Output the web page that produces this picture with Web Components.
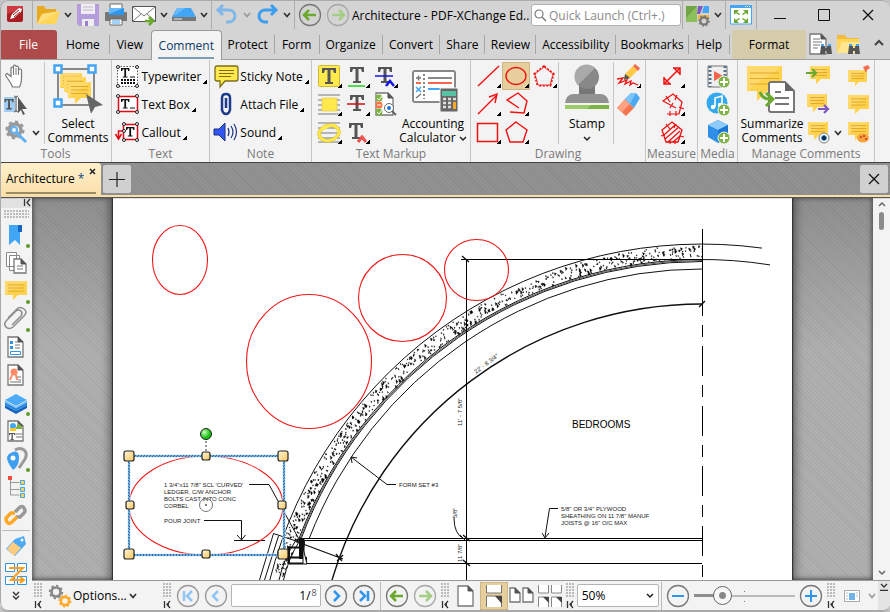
<!DOCTYPE html>
<html lang="en">
<head>
<meta charset="utf-8">
<title>Architecture - PDF-XChange Editor</title>
<style>
  html, body { height: 100%; }
  body {
    margin: 0;
    background: #c4c4c4;
    font-family: "Open Sans", "Noto Sans", sans-serif;
    font-size: 12px;
    color: #000;
  }
</style>
</head>
<body>
<pdf-editor></pdf-editor>

<script>
// ---------- icon parts ----------
const bubble = (x, y, w, h) => `
  <path d="M${x} ${y}h${w}v${h}h-${w * .45 | 0}l-${h * .4 | 0} ${h * .4 | 0}v-${h * .4 | 0}H${x}z" fill="#ffd24d"/>
  <path d="M${x} ${y}h${w}L${x} ${y + h}z" fill="#ffdf80" opacity=".6"/>
  <path d="M${x + 3} ${y + h * .28}h${w - 6}M${x + 3} ${y + h * .5}h${w - 6}M${x + 3} ${y + h * .72}h${w - 6}" stroke="#e0a92a"/>`;

const page = (x, y, w, h, c = '#777') => `
  <path d="M${x} ${y}h${w - 5}l5 5v${h - 5}H${x}z" fill="#fff" stroke="${c}" stroke-width="1.3"/>
  <path d="M${x + w - 5} ${y}l5 5h-5z" fill="#555" stroke="#555"/>`;

const bigT = (x, y, s = 1, c = '#555') =>
  `<path transform="translate(${x} ${y}) scale(${s})" d="M0 0h14v5h-2l-1-3H8.500v12H11v2H3v-2h2.500V2H3L2 5H0z" fill="${c}"/>`;

const plus = (x, y) => `
  <circle cx="${x}" cy="${y}" r="6" fill="#7cb342" stroke="#f3f3f3"/>
  <path d="M${x - 4} ${y}h8M${x} ${y - 4}v8" stroke="#fff" stroke-width="2"/>`;

const ring = (inner, c = '#777') => `<circle cx="14" cy="14" r="10.500" fill="none" stroke="${c}" stroke-width="1.300"/>${inner}`;

const knobs = pts => pts.map(([x, y]) => `<circle cx="${x}" cy="${y}" r="1.500" fill="#fff" stroke="#222"/>`).join('');

const lines = (x1, x2, ys, c, w = 2) =>
  ys.map(y => `<path d="M${x1} ${y}H${x2}" stroke="${c}" stroke-width="${w}"/>`).join('');

const binoculars = (x, y) => `
  <g transform="translate(${x} ${y})" fill="#555"><path d="M1 2h4v8H0zM7 2h4l1 8H7zM4 4h4v3H4z"/><path d="M1 0h3v2H1zM8 0h3v2H8z" fill="#42a5f5"/></g>`;

// body ring plus eight teeth
const gear = (x, y, r, c) => `
  <circle cx="${x}" cy="${y}" r="${r}" fill="none" stroke="${c}" stroke-width="${r * .6}"/>
  <circle cx="${x}" cy="${y}" r="${r * 1.400}" fill="none" stroke="${c}" stroke-width="${r * .4}" pathLength="16" stroke-dasharray="1 1"/>`;

// ---------- icons, drawn in a 28px cell unless a size is given ----------
const ICONS = {
  chev: { w: 12, svg: '<path d="M3 12l3 3.500 3-3.500" fill="none" stroke="#333" stroke-width="1.700"/>' },
  chevSoft: { w: 12, svg: '<path d="M3 12l3 3.500 3-3.500" fill="none" stroke="#999" stroke-width="1.700"/>' },
  chevUp: '<path d="M13 15l4-4 4 4" fill="none" stroke="#444" stroke-width="2"/>',
  logo: '<rect x="4" y="5" width="16" height="16" rx="2" fill="#a81c22"/><path d="M4 13V5h16v3z" fill="#cf3a40"/><path d="M7 18l2-5 7-6 3 1-1 3-7 6z" fill="#fff"/><path d="M10 14l6-5M11 16l6-5" stroke="#a81c22"/>',
  folder: '<path d="M3 5h7l2 3h10v5l-4 9H3z" fill="#e8aa1e"/><path d="M3 23l5-10 18-3-4 13z" fill="#ffd65a"/><path d="M3 23l5-10 18-3z" fill="#ffe38a" opacity=".7"/>',
  save: '<path d="M3 3h22v22H5l-2-2z" fill="#b39ddb"/><path d="M7 3h14v10H7z" fill="#f1edf6"/><path d="M9 6h10M9 9h10" stroke="#bbb"/><path d="M8 18h12v7H8z" fill="#eee"/><path d="M11 20h3v5h-3z" fill="#9b7fc9"/>',
  print: '<path d="M8 3h12v7H8z" fill="#fff" stroke="#666"/><path d="M3 12q0-1 1-1h20q1 0 1 1v8H3z" fill="#777"/><path d="M7 7h15v7H7z" fill="#2f95ec"/><path d="M7 7h15L7 13z" fill="#66b8fa"/><path d="M8 18h12v6H8z" fill="#fff" stroke="#666"/><path d="M10 20h8M10 22h8" stroke="#42a5f5"/>',
  mail: '<path d="M2.500 5.500h23v15h-23z" fill="#fff" stroke="#555"/><path d="M3 6l11 9L25 6M3 20l8-7M25 20l-8-7" fill="none" stroke="#777"/><path d="M15 20h8M19 16l4 4-4 4" fill="none" stroke="#6aa82f" stroke-width="2.500"/>',
  scan: '<path d="M7 7h14l5 9H2z" fill="#42a5f5"/><path d="M7 7h8L4 15z" fill="#6dbcfa"/><path d="M2 16h24v4H2z" fill="#777"/><path d="M4 18h8" stroke="#eee"/>',
  undo: '<path d="M10 4l-5 5 5 5M6 9h10a6 6 0 0 1 0 12h-3" fill="none" stroke="#7fb8e8" stroke-width="3"/>',
  redo: '<path d="M18 4l5 5-5 5M22 9H12a6 6 0 0 0 0 12h3" fill="none" stroke="#3d9ef0" stroke-width="3"/>',
  back: ring('<path d="M20 14H9M13 9l-5 5 5 5" fill="none" stroke="#6aa82f" stroke-width="2.500"/>'),
  fwd: ring('<path d="M8 14h11M15 9l5 5-5 5" fill="none" stroke="#a5cd85" stroke-width="2.500"/>', '#a8a8a8'),
  first: ring('<path d="M10 9v10M18 9l-5 5 5 5" fill="none" stroke="#90c5f5" stroke-width="2.500"/>', '#999'),
  prev: ring('<path d="M16 9l-5 5 5 5" fill="none" stroke="#90c5f5" stroke-width="2.500"/>', '#999'),
  next: ring('<path d="M12 9l5 5-5 5" fill="none" stroke="#2f95ec" stroke-width="2.500"/>'),
  last: ring('<path d="M10 9l5 5-5 5M18 9v10" fill="none" stroke="#2f95ec" stroke-width="2.500"/>'),
  minus: ring('<path d="M8 14h12" stroke="#2f95ec" stroke-width="2"/>'),
  zoomIn: ring('<path d="M8 14h12M14 8v12" stroke="#2f95ec" stroke-width="2"/>'),
  uiTheme: '<path d="M2 5h11v16H2z" fill="#8bbf5a"/><path d="M2 5h11L2 17z" fill="#6fa544"/><path d="M14 5h5l-3 8h-3z" fill="#7e57c2"/><path d="M20 5h5v7h-7z" fill="#42a5f5"/><path d="M14 14h11v4H14z" fill="#f0b23c"/>' + gear(20, 20, 3.6, '#777'),
  fullScreen: '<path d="M3.500 5h21v18h-21z" fill="#fff" stroke="#42a5f5"/><path d="M3 4h22v3H3z" fill="#42a5f5"/><path d="M18 5.500h1M20 5.500h1M22 5.500h1" stroke="#fff"/><path d="M7 9h5l-2 2 3 2-1 1-3-2-2 2zM21 9h-5l2 2-3 2 1 1 3-2 2 2zM7 22h5l-2-2 3-2-1-1-3 2-2-2zM21 22h-5l2-2-3-2 1-1 3 2 2-2z" fill="#6aa82f"/>',
  winMin: '<path d="M8 17.500h12" stroke="#111"/>',
  winMax: '<path d="M8.500 8.500h11v11h-11z" fill="none" stroke="#111"/>',
  winClose: '<path d="M9 9l10 10M19 9L9 19" stroke="#111" stroke-width="1.300"/>',
  findPage: page(4, 4, 16, 20) + '<path d="M7 9h7M7 12h9M7 15h7M7 18h5" stroke="#777"/>' + binoculars(14, 14),
  findFolder: '<path d="M3 5h8l2 3h12v5H3z" fill="#f0bc3a"/><path d="M3 9h22v14H3z" fill="#ffd65a"/><path d="M3 23l5-11h18l-4 11z" fill="#ffe690"/>' + binoculars(14, 14),

  hand: '<path d="M8 20l-4-6q-1-2 1-2.500l4 3V6q1-2 2.500 0V4q1-2 2.500 0v1q1-2 2.500 0v3q2-2 3 0v9q0 4-2 8h-7q-1-3-2.500-5z" fill="#fff" stroke="#777" stroke-width="1.200"/><path d="M11.500 6v7M14 6v7M16.500 8v5" stroke="#777"/>',
  selText: '<path d="M2 7h11v15H2z" fill="#9fcdf5"/>' + bigT(2.500, 9, .65) + '<path d="M12 6q2 0 2 2v12q0 2-2 2M16 6q-2 0-2 2M16 22q-2 0-2-2" fill="none" stroke="#555"/><path d="M16 7l9 12h-5l3 5-2 1-2-5-3 3z" fill="#555"/>',
  gearWrench: gear(13, 12, 6, '#999') + '<path d="M13 13l11 11" stroke="#5eb3f6" stroke-width="3"/><circle cx="12" cy="12" r="3" fill="#f3f3f3" stroke="#5eb3f6" stroke-width="2"/>',
  typewriter: '<path d="M3.500 4.500h20v20h-20z" fill="#fff" stroke="#555" stroke-dasharray="1.500 1.500"/>' + bigT(7, 6, .6, '#111') + '<path d="M16 15h5" stroke="#111"/><path d="M7 18h14M7 21h14" stroke="#111" stroke-width="2" stroke-dasharray="2 1"/>' + knobs([[4, 5], [23, 5], [4, 24], [23, 24]]),
  textBox: '<path d="M4.500 6.500h19v15h-19z" fill="#fff" stroke="#e30613" stroke-width="1.500"/>' + bigT(7, 9, .6, '#111') + '<path d="M16 18h5" stroke="#111"/>' + knobs([[4, 6], [23, 6], [4, 22], [23, 22]]),
  callout: '<path d="M9.500 6.500h14v15h-14z" fill="#fff" stroke="#e30613" stroke-width="1.500"/>' + bigT(12, 9, .6, '#111') + '<path d="M9 13H4.500v7M1.500 16l3 5 3-5" fill="none" stroke="#e30613" stroke-width="1.500"/>' + knobs([[10, 6], [23, 6], [10, 13], [23, 22], [10, 22]]),
  sticky: '<path d="M5 4h19q2 0 2 2v11q0 2-2 2H13l-5 6v-6H5q-2 0-2-2V6q0-2 2-2z" fill="#ffe94d" stroke="#7c6c1a" stroke-width="1.300"/><path d="M7 8.500h15M7 11.500h15M7 14.500h12" stroke="#7c6c1a"/>',
  attach: '<path d="M10 10v10q1 4 4 4t4-4V8q0-4-4-4t-4 4v8" fill="none" stroke="#1e3a8a" stroke-width="2.500"/><path d="M14 8v10" stroke="#1e3a8a" stroke-width="2.500"/>',
  sound: '<path d="M2 11h5l6-6v18l-6-6H2z" fill="#3355f0" stroke="#1a2f86"/><path d="M16 10q2 4 0 8M19 8q4 6 0 12M22 6q5 8 0 16" fill="none" stroke="#1a2f86" stroke-width="1.200"/>',
  hiT: '<rect x="3.500" y="3.500" width="21" height="21" rx="1" fill="#ffe94d" stroke="#d2b93a"/>' + bigT(7, 6),
  underT: bigT(7, 5) + '<path d="M5 24h17" stroke="#1bd31b" stroke-width="1.500"/>',
  replaceT: bigT(7, 5) + '<path d="M4 14h18" stroke="#1414e6" stroke-width="1.500"/><path d="M15 24l4-5 4 5" fill="none" stroke="#1414e6" stroke-width="2.500"/>',
  hiArea: lines(3, 25, [5, 10, 15, 20, 24], '#b5b5b5') + '<path d="M7 8h15v13H7z" fill="#ffe94d" stroke="#e2c63b" stroke-width=".6"/>',
  strikeT: bigT(7, 5) + '<path d="M4 14h18" stroke="#e30613" stroke-width="1.500"/>',
  compareDoc: page(5, 3, 17, 22) + '<circle cx="8" cy="8" r="3.500" fill="#7cb342"/><circle cx="8" cy="15" r="3.500" fill="#ff7043"/><circle cx="8" cy="22" r="3.500" fill="#7cb342"/><path d="M6 8l2 2 3-4M6 22l2 2 3-4M6 15h4" fill="none" stroke="#fff"/><circle cx="18" cy="18" r="4.500" fill="#fff" stroke="#666"/><circle cx="18" cy="18" r="2" fill="#1976d2"/><path d="M21 21l4 4" stroke="#666" stroke-width="2"/>',
  hiFree: lines(3, 25, [5, 10, 15, 20, 24], '#b5b5b5') + '<g fill="none"><ellipse cx="14" cy="15" rx="10" ry="7.500" stroke="#d8bd25" stroke-width="3.500" transform="rotate(-15 14 15)"/><ellipse cx="14" cy="15" rx="10" ry="7.500" stroke="#ffe94d" stroke-width="2.500" transform="rotate(-15 14 15)"/><path d="M8 12q5-5 13-5" stroke="#ffe94d" stroke-width="2"/></g>',
  insertT: bigT(6, 5) + '<path d="M15 24l4-5 4 5" fill="none" stroke="#ef5350" stroke-width="3"/>',
  line: '<path d="M4 24L25 4" stroke="#f01010" stroke-width="1.400"/>',
  oval: '<ellipse cx="14" cy="14" rx="10" ry="8.500" fill="none" stroke="#f01010" stroke-width="1.400"/>',
  cloud: '<path d="M14 5l9 7-3 11H8L5 12z" fill="none" stroke="#f01010" stroke-width="3" stroke-dasharray="2 1.500"/><path d="M14 5l9 7-3 11H8L5 12z" fill="#f3f3f3" stroke="#f01010" stroke-width=".8"/>',
  arrow: '<path d="M4 24L22 6M15 7l8-3-2 9" fill="none" stroke="#f01010" stroke-width="1.400"/>',
  polyline: '<path d="M17 18L5 10l11-7 9 8-3 12-14-1" fill="none" stroke="#f01010" stroke-width="1.400"/>',
  rect: '<path d="M3.500 5.500h20v18h-20z" fill="none" stroke="#f01010" stroke-width="1.500"/>',
  polygon: '<path d="M14 4l11 8-4 12H8L4 12z" fill="none" stroke="#f01010" stroke-width="1.400"/>',
  pencil: '<path d="M11 12l8-8 5 4-8 8-6 2z" fill="#ffc845"/><path d="M19 4l2-2 5 4-2 3z" fill="#ef6c50"/><path d="M10 18l1-6 5 4z" fill="#555"/><path d="M3 17l6-1-4 5 8-3-2 4 6-3-1 4 3-2 5 2" fill="none" stroke="#f01010" stroke-width="1.300"/>',
  eraser: '<path d="M11 9l9 9-8 8-9-8z" fill="#f4764e"/><path d="M11 9l5 5-8 8-5-4z" fill="#ffa183"/><path d="M11 9l6-6h5l4 5-6 10z" fill="#4aa9f2"/><path d="M11 9l6-6h5l-6 11z" fill="#7cc4fa"/>',
  distance: '<path d="M6 22L22 6M6 15v7h7M15 6h7v7M6 16l6 6M16 6l6 6" fill="none" stroke="#f01010" stroke-width="1.500"/>',
  perimeter: '<path d="M18 18L5 11l10-7 9 8-3 12H9" fill="none" stroke="#f01010" stroke-width="1.200"/><path d="M8 6l4 6M19 5l-2 5M21 17l5 2M12 21v5M18 21v5M12 18l3-5" stroke="#f01010" stroke-width="1.200"/>',
  area: '<path d="M14 4l10 8-4 12H8L4 12z" fill="none" stroke="#f01010" stroke-width="1.300"/><path d="M6 17L17 7M7 21L21 9M10 24l12-11M15 24l7-6M8 6l4 5M18 6l-2 4M3 18l4-1M22 18l4 1M12 22v4M17 22v4" stroke="#f01010" stroke-width="1.200"/>',
  film: '<path d="M4 4h19v21H4z" fill="#eee" stroke="#777"/><path d="M6 4v21M21 4v21" stroke="#54708a" stroke-width="3" stroke-dasharray="2 2"/><path d="M10 9l9 5-9 5z" fill="#f4664c"/>' + plus(20, 20),
  music: '<circle cx="13" cy="13" r="10.500" fill="#33a8ee"/><path d="M11 17V8l7-2v9" fill="none" stroke="#fff" stroke-width="1.600"/><circle cx="9" cy="17" r="2.200" fill="#fff"/><circle cx="16" cy="15" r="2.200" fill="#fff"/>' + plus(20, 20),
  cube: '<path d="M14 2l10 5v12l-10 6-10-6V7z" fill="#2f8fe6"/><path d="M14 2l10 5-10 5L4 7z" fill="#8fcbfa"/><path d="M14 12v13l10-6V7z" fill="#1976d2"/>' + plus(20, 20),
  importC: bubble(6, 4, 20, 13) + '<path d="M2 11h9M8 7l4 4-4 4" fill="none" stroke="#6aa82f" stroke-width="2.200"/>',
  exportC: bubble(3, 4, 20, 13) + '<path d="M14 19h9M20 15l4 4-4 4" fill="none" stroke="#7e57c2" stroke-width="2.200"/>',
  showC: bubble(4, 4, 20, 13) + '<circle cx="20" cy="20" r="5" fill="#fff" stroke="#777"/><circle cx="20" cy="20" r="2.500" fill="#123" stroke="#2f95ec"/>',
  pinC: bubble(4, 8, 19, 12) + '<path d="M19 5l5-2 2 3-3 2-1 3z" fill="#ef6c50"/>',
  plainC: bubble(4, 5, 21, 14),
  paintC: bubble(4, 4, 21, 13) + '<ellipse cx="19" cy="20" rx="6" ry="4.500" fill="#f6a13a"/><path d="M16 19h2M19 18h2M21 21h2" stroke="#c0392b" stroke-width="1.500"/>',

  bookmark: '<path d="M9 4h12v6h-1v14l-5-5-6 5z" fill="#42a5f5"/><path d="M19 4h3v7h-4V5z" fill="#1565c0"/>',
  pages: '<path d="M6.500 3.500h10v14h-10zM9.500 6.500h10v15h-10z" fill="#fff" stroke="#888"/>' + page(14, 10, 12, 14) + '<path d="M17 17h6M17 20h6" stroke="#777"/>',
  comments: bubble(5, 4, 22, 14),
  clip: '<path d="M12 20l9-9q2-3 0-5t-5 0L7 15q-4 4-1 7t7 0l11-11q4-4 0-7t-7 0L8 13" fill="none" stroke="#8d8d8d" stroke-width="1.500"/>',
  fields: page(8, 4, 15, 20) + '<path d="M10 8h3v3h-3zM10 13h3v3h-3z" fill="#2f95ec"/><path d="M15 9h3M15 12h5M15 15h5" stroke="#777"/><path d="M10.500 18.500h10v3h-10z" fill="none" stroke="#2f95ec"/>',
  signs: page(8, 4, 15, 20) + '<circle cx="14" cy="11" r="3.500" fill="#ff8a65"/><path d="M12 14l-2 5M16 14l1 5" stroke="#ff8a65" stroke-width="2"/><path d="M17 16h4M10 21h11M18 19h3" stroke="#777"/>',
  layers: '<path d="M5 16l11 6 11-6v3l-11 6-11-6z" fill="#1565c0"/><path d="M5 12v4l11 6 11-6v-4l-11 6z" fill="#2586e0"/><path d="M5 11l11-6 11 6-11 6z" fill="#4dabf5"/><path d="M5 13l11 6 11-6" fill="none" stroke="#8fcbfa"/>',
  content: page(8, 4, 15, 20) + '<circle cx="13" cy="9" r="3" fill="#42a5f5"/><path d="M15 12l4-6 4 6z" fill="#7cb342"/><path d="M10 11h6v3h-6z" fill="#ffca28"/>' + bigT(9, 16, .45) + '<path d="M16 17h6M16 20h6" stroke="#777"/>',
  places: '<path d="M15 5q5-3 9 0t1 9l-6 9" fill="none" stroke="#999" stroke-width="3"/><path d="M13 25q-6-8-6-12t6-6 6 6-6 12z" fill="#3f9ef0"/><circle cx="13" cy="13" r="2.500" fill="#fff"/>',
  tree: '<path d="M8 3h4v4H8z" fill="#ef4b3c"/><path d="M10.500 7v15h9M10.500 9.500h9M10.500 16.500h9" fill="none" stroke="#999"/><path d="M20.500 7.500h4v4h-4zM20.500 14.500h4v4h-4zM20.500 20.500h4v4h-4z" fill="#ffd24d" stroke="#42a5f5"/>',
  links: '<path d="M15 11l4-4q3-3 5 0t0 5l-4 4-4 0" fill="none" stroke="#999" stroke-width="3.500"/><path d="M17 16l-5 5q-3 3-5 0t0-5l4-4h4" fill="none" stroke="#ffa726" stroke-width="3.500"/>',
  tag: '<path d="M15 7l9-3 2 8-11 12-9-7z" fill="#4dabf5"/><path d="M13 10l8 6-7 8-7-7z" fill="#ffcc80"/><circle cx="22" cy="8" r="1.500" fill="#fff"/>',
  reflow: '<path d="M5.500 3.500h9v8h-9zM17.500 3.500h9v8h-9zM5.500 16.500h9v8h-9zM17.500 16.500h9v8h-9z" fill="#fff" stroke="#2f95ec"/><path d="M9 8h14L11 20h13M20 17l4 3-4 3" fill="none" stroke="#ff9f1c" stroke-width="2"/>',
  gears: gear(11, 10, 4.5, '#888') + gear(20, 19, 4, '#ffa726'),
  onePage: page(6, 4, 15, 20),
  contPage: '<path d="M6.500 3v8h15V3" fill="#fff" stroke="#777"/><path d="M6.500 25V14h15v11" fill="#fff" stroke="#777"/><path d="M15 14h7v8z" fill="#444"/>',
  twoPage: page(2, 6, 10, 14) + page(15, 6, 10, 14),
  fourPage: '<path d="M2.500 3v8h10V3M15.500 3v8h10V3M2.500 25V15h10v10M15.500 25V15h10v10" fill="#fff" stroke="#888"/><path d="M7 15h6v6zM20 15h6v6z" fill="#444"/>',
  panes: '<path d="M6.500 8.500h15v11h-15z" fill="#fff" stroke="#aaa"/><path d="M11 11h6v7h-6z" fill="#6fb3e8"/><path d="M8 11h2M8 14h2M8 17h2M18 11h2M18 14h2" stroke="#bbb"/>',
  plusThin: '<path d="M14 7v15M6 14.500h16" stroke="#222" stroke-width="1.200"/>',

  selectBig: { w: 60, h: 50, svg: '<path d="M10 6h36v36H10z" fill="none" stroke="#888" stroke-width="2"/>' + bubble(12, 10, 22, 15) + bubble(16, 14, 22, 15) + bubble(20, 19, 23, 16) + '<path d="M6.500 2.500h7v7h-7zM40.500 2.500h7v7h-7zM6.500 36.500h7v7h-7z" fill="#fff" stroke="#42a5f5" stroke-width="2.500"/><path d="M38 31l17 11-8 2-4 7z" fill="#666"/>' },
  calcBig: { w: 60, h: 50, svg: '<rect x="10" y="8" width="42" height="31" rx="2" fill="#fff" stroke="#888" stroke-width="2"/><path d="M13 15h5M15.500 12.500v5M13 35l5-4" stroke="#777" stroke-width="1.500"/><path d="M13 20h5" stroke="#f4664c" stroke-width="2"/><path d="M13 24l5 5M18 24l-5 5" stroke="#42a5f5" stroke-width="1.500"/><path d="M21 11v25" stroke="#888" stroke-width="2" stroke-dasharray="2 2"/><path d="M25 15h24" stroke="#888" stroke-width="2"/><path d="M25 20h24" stroke="#f4664c" stroke-width="2"/><path d="M25 26h24" stroke="#42a5f5" stroke-width="2"/><rect x="37" y="25" width="18" height="24" rx="1" fill="#666" stroke="#f3f3f3"/><path d="M39 28h14v5H39z" fill="#58c2a5"/><path d="M40 36h3M45 36h3M40 40h3M45 40h3M40 44h3M45 44h3M50 36h3" stroke="#ddd" stroke-width="2.500"/><path d="M50 39h3v7h-3z" fill="#f7a928"/>' },
  stampBig: { w: 60, h: 50, svg: '<path d="M22 20h16v12H22z" fill="#777"/><circle cx="30" cy="14" r="12" fill="#888"/><path d="M21 22a12 12 0 1 1 17-17z" fill="#aaa"/><path d="M8 40q1-9 9-9h26q8 0 9 9z" fill="#929292"/><path d="M8 42h44v4H8z" fill="#7cb342"/><path d="M8 42h26l-4 4H8z" fill="#9ccc65"/>' },
  summaryBig: { w: 60, h: 50, svg: bubble(5, 3, 35, 25) + '<path d="M29 19h14l9 9v21H29q-2 0-2-2V21q0-2 2-2z" fill="#fff" stroke="#777" stroke-width="2"/><path d="M43 19v9h9z" fill="#666"/><path d="M33 29h6M33 35h14M33 41h14" stroke="#777" stroke-width="2"/><path d="M18 29q3 8 11 7M24 30l7 6-7 7" fill="none" stroke="#6aa82f" stroke-width="3"/>' }
};

// ---------- base ----------
class PxElement extends HTMLElement {
  constructor() {
    super();
    this.attachShadow({ mode: 'open' });
  }
  connectedCallback() {
    this.shadowRoot.innerHTML = `<style>${this.styles()}</style>${this.markup()}`;
  }
  styles() { return ''; }
  markup() { return '<slot></slot>'; }
}

class PxIcon extends PxElement {
  styles() { return ':host { display: block; flex: none; } svg { display: block; }'; }
  markup() {
    const entry = ICONS[this.getAttribute('name')];
    const icon = typeof entry === 'string' ? { svg: entry } : entry;
    const w = icon.w || 28;
    const h = icon.h || 28;
    return `<svg width="${w}" height="${h}" viewBox="0 0 ${w} ${h}" aria-hidden="true">${icon.svg}</svg>`;
  }
}
customElements.define('px-icon', PxIcon);

// icon: icon name, corner: small black mark, big: icon above the label
class ToolButton extends PxElement {
  styles() {
    return `
      :host { display: block; flex: none; }
      button {
        all: unset; box-sizing: border-box; position: relative;
        display: flex; align-items: center; min-height: 28px;
        font: inherit; color: inherit; white-space: nowrap; cursor: default;
      }
      .mark {
        width: 4px; height: 4px; align-self: flex-end; margin: 0 0 6px 2px;
        background: linear-gradient(135deg, transparent 50%, #000 50%);
      }
      :host([iconic]) .mark { position: absolute; right: 1px; bottom: 2px; margin: 0; }
      :host([selected]) button { background: #e6cf9c; box-shadow: inset 0 0 0 1px #cdb686; }
      :host([big]) button { flex-direction: column; text-align: center; line-height: 14px; }
      :host([big]) px-icon { margin: 1px 0 4px; }
      :host([wide]) button { width: 44px; justify-content: center; }
      .dot { position: absolute; right: -2px; bottom: 1px; width: 4px; height: 4px; border-radius: 50%; background: #5f9d2a; }
    `;
  }
  markup() {
    const name = this.getAttribute('label');
    return `<button type="button" ${name ? `aria-label="${name}"` : ''}>
      <px-icon name="${this.getAttribute('icon')}"></px-icon>
      ${this.hasAttribute('iconic') ? '' : '<span><slot></slot></span>'}
      ${this.hasAttribute('corner') ? '<span class="mark"></span>' : ''}
      ${this.hasAttribute('dot') ? '<span class="dot"></span>' : ''}
    </button>`;
  }
}
customElements.define('tool-button', ToolButton);

const tool = (icon, label, extra = '') =>
  `<tool-button iconic icon="${icon}" label="${label}" ${extra}></tool-button>`;

class GripHandle extends PxElement {
  styles() {
    return `
      :host { display: flex; flex-direction: column; align-items: flex-start; gap: 2px; width: 11px; margin-left: 2px; flex: none; }
      i { width: 9px; height: 15px; background: radial-gradient(circle at 1px 1px, #bbb 1px, transparent 1px) 0 0 / 3px 3px; }
    `;
  }
  markup() {
    return '<i></i><svg width="9" height="9" aria-hidden="true"><path d="M1.500 1v7M7 1L4 4.500 7 8M4 4.500h2" fill="none" stroke="#333" stroke-width="1.300"/></svg>';
  }
}
customElements.define('grip-handle', GripHandle);

// ---------- title bar ----------
class TitleBar extends PxElement {
  styles() {
    return `
      :host { display: flex; align-items: center; height: 30px; background: #d4d4d4; }
      hr { width: 1px; height: 28px; margin: 0 1px; border: 0; background: #adadad; flex: none; }
      h1 { flex: 1; min-width: 0; margin: 0; font: inherit; white-space: nowrap; }
      label {
        display: flex; align-items: center; box-sizing: border-box; width: 150px; height: 22px;
        background: #fff; border: 1px solid #b0b0b0; border-radius: 3px; flex: none;
      }
      input { all: unset; width: 126px; font: inherit; }
      input::placeholder { color: #8a8a8a; opacity: 1; }
      .logo { width: 31px; }
      .logo px-icon { margin-left: 3px; }
      label svg { margin: 0 2px 0 1px; flex: none; }
    `;
  }
  markup() {
    return `
      <span class="logo"><px-icon name="logo"></px-icon></span><hr>
      ${tool('folder', 'Open')}${tool('chev', 'Open options')}
      ${tool('save', 'Save')}${tool('print', 'Print')}
      ${tool('mail', 'Email')}${tool('chev', 'Email options')}
      ${tool('scan', 'Scan')}${tool('chev', 'Scan options')}<hr>
      ${tool('undo', 'Undo')}${tool('chevSoft', 'Undo list')}
      ${tool('redo', 'Redo')}${tool('chev', 'Redo list')}<hr>
      ${tool('back', 'Previous view')}${tool('fwd', 'Next view')}
      <h1>Architecture - PDF-XChange Ed..</h1>
      <label>
        <svg width="14" height="16" aria-hidden="true"><circle cx="6" cy="7" r="4" fill="none" stroke="#777" stroke-width="1.200"/><path d="M9 10l4 4" stroke="#777" stroke-width="1.500"/></svg>
        <input type="text" aria-label="Quick Launch" placeholder="Quick Launch (Ctrl+.)">
      </label><hr>
      ${tool('uiTheme', 'UI options')}${tool('chev', 'UI options list')}<hr>
      ${tool('fullScreen', 'Full screen')}<hr>
      ${tool('winMin', 'Minimize', 'wide')}${tool('winMax', 'Maximize', 'wide')}${tool('winClose', 'Close', 'wide')}`;
  }
}
customElements.define('title-bar', TitleBar);

// ---------- ribbon tabs ----------
class RibbonTab extends PxElement {
  styles() {
    return `
      :host { display: flex; min-width: 0; position: relative; }
      button {
        all: unset; flex: 1; text-align: center; white-space: nowrap; cursor: default;
        margin: 5px 0; line-height: 19px; border-right: 1px solid #a6a6a6;
      }
      :host([plain]) button { border-color: transparent; }
      :host([kind]) button { margin: 0; line-height: 29px; border: 0; }
      :host([kind=file]) button { background: #ad4a4a; color: #fff; border-radius: 3px 3px 0 0; }
      :host([kind=format]) { margin-left: 2px; }
      :host([kind=format]) button { background: #d5ccab; }
      :host([kind=active]) { margin-bottom: -1px; }
      :host([kind=active]) button {
        background: linear-gradient(#7c9fb5, #7c9fb5) center bottom 1px / 56px 2px no-repeat #f3f3f3;
        color: #0b3a66; border: 1px solid #999; border-bottom: 0; border-radius: 4px 4px 0 0; line-height: 28px;
      }
    `;
  }
  markup() { return '<button type="button" role="tab"><slot></slot></button>'; }
}
customElements.define('ribbon-tab', RibbonTab);

class RibbonTabs extends PxElement {
  styles() {
    return ':host { display: flex; height: 29px; background: #d4d4d4; border-bottom: 1px solid #a0a0a0; }';
  }
  markup() {
    const tabs = [
      ['File', 57, 'kind="file"'], ['Home', 53], ['View', 41, 'plain'], ['Comment', 71, 'kind="active"'],
      ['Protect', 53], ['Form', 45], ['Organize', 63], ['Convert', 58], ['Share', 45], ['Review', 51],
      ['Accessibility', 80], ['Bookmarks', 73], ['Help', 41], ['Format', 74, 'kind="format"']
    ];
    return tabs.map(([text, grow, extra = '']) => `<ribbon-tab ${extra} style="flex: ${grow} 1 0">${text}</ribbon-tab>`).join('')
      + tool('findPage', 'Find') + tool('findFolder', 'Search') + tool('chevUp', 'Collapse ribbon');
  }
}
customElements.define('ribbon-tabs', RibbonTabs);

// ---------- ribbon ----------
class RibbonGroup extends PxElement {
  styles() {
    return `
      :host { display: flex; flex-direction: column; min-width: 0; border-right: 1px solid #c6c6c6; box-sizing: border-box; }
      .body { display: flex; justify-content: center; height: 85px; padding-top: 2px; }
      .name { line-height: 14px; color: #7a7a7a; text-align: center; white-space: nowrap; }
      ::slotted(.col) { display: flex; flex-direction: column; align-items: flex-start; }
      ::slotted(.grid) { display: grid; grid-template-columns: repeat(3, auto); align-content: start; }
      ::slotted(hr) { width: 1px; height: 82px; margin: 0 2px; border: 0; background: #c6c6c6; }
    `;
  }
  markup() { return `<div class="body"><slot></slot></div><div class="name">${this.getAttribute('name')}</div>`; }
}
customElements.define('ribbon-group', RibbonGroup);

class RibbonPanel extends PxElement {
  styles() {
    return `
      :host {
        display: grid; height: 102px; background: #f3f3f3;
        grid-template-columns: 112fr 98fr 102fr 159fr 175fr 52fr 40fr 137fr 15fr;
      }
      .low { justify-content: flex-end; }
    `;
  }
  markup() {
    const chevron = '<svg width="8" height="6" aria-hidden="true"><path d="M1 1l3 3 3-3" fill="none" stroke="#222" stroke-width="1.500"/></svg>';
    return `
      <ribbon-group name="Tools">
        <div class="col">${tool('hand', 'Hand')}${tool('selText', 'Select text')}${tool('gearWrench', 'Other tools')}</div>
        <div class="col low">${tool('chev', 'More tools')}</div>
        <hr>
        <tool-button big icon="selectBig">Select<br>Comments</tool-button>
      </ribbon-group>
      <ribbon-group name="Text">
        <div class="col">
          <tool-button icon="typewriter" corner>Typewriter</tool-button>
          <tool-button icon="textBox" corner>Text Box</tool-button>
          <tool-button icon="callout" corner>Callout</tool-button>
        </div>
      </ribbon-group>
      <ribbon-group name="Note">
        <div class="col">
          <tool-button icon="sticky" corner>Sticky Note</tool-button>
          <tool-button icon="attach" corner>Attach File</tool-button>
          <tool-button icon="sound" corner>Sound</tool-button>
        </div>
      </ribbon-group>
      <ribbon-group name="Text Markup">
        <div class="grid">
          ${tool('hiT', 'Highlight', 'corner')}${tool('underT', 'Underline', 'corner')}${tool('replaceT', 'Replace', 'corner')}
          ${tool('hiArea', 'Highlight area', 'corner')}${tool('strikeT', 'Strikeout', 'corner')}${tool('compareDoc', 'Review markup')}
          ${tool('hiFree', 'Freehand highlight', 'corner')}${tool('insertT', 'Insert', 'corner')}
        </div>
        <tool-button big icon="calcBig">Accounting<br>Calculator ${chevron}</tool-button>
      </ribbon-group>
      <ribbon-group name="Drawing">
        <div class="grid">
          ${tool('line', 'Line', 'corner')}${tool('oval', 'Oval', 'corner selected')}${tool('cloud', 'Cloud', 'corner')}
          ${tool('arrow', 'Arrow', 'corner')}${tool('polyline', 'Polyline', 'corner')}<span></span>
          ${tool('rect', 'Rectangle', 'corner')}${tool('polygon', 'Polygon', 'corner')}
        </div>
        <hr style="margin: 0 -2px 0 0">
        <tool-button big icon="stampBig">Stamp<br>${chevron}</tool-button>
        <hr style="margin: 0 0 0 -4px">
        <div class="col">${tool('pencil', 'Pencil', 'corner')}${tool('eraser', 'Eraser')}</div>
      </ribbon-group>
      <ribbon-group name="Measure">
        <div class="col">${tool('distance', 'Distance', 'corner')}${tool('perimeter', 'Perimeter', 'corner')}${tool('area', 'Area', 'corner')}</div>
      </ribbon-group>
      <ribbon-group name="Media">
        <div class="col">${tool('film', 'Video')}${tool('music', 'Audio')}${tool('cube', '3D')}</div>
      </ribbon-group>
      <ribbon-group name="Manage Comments">
        <tool-button big icon="summaryBig">Summarize<br>Comments</tool-button>
        <div class="col">${tool('importC', 'Import comments')}${tool('exportC', 'Export comments')}${tool('showC', 'Show comments')}</div>
        <div class="col low">${tool('chev', 'Show options')}</div>
        <div class="col">${tool('pinC', 'Pin comments')}${tool('plainC', 'Comments pane')}${tool('paintC', 'Comment styles')}</div>
      </ribbon-group>`;
  }
}
customElements.define('ribbon-panel', RibbonPanel);

// ---------- document tabs ----------
class DocumentTabs extends PxElement {
  styles() {
    return `
      :host {
        display: flex; align-items: center; gap: 2px; height: 32px; padding-right: 2px;
        border-top: 1px solid #444; border-bottom: 2px solid #f7dfa9;
        background: repeating-linear-gradient(45deg, #8b8b8b 0 1px, #929292 1px 3px);
        box-shadow: 0 1px 1px #555; position: relative;
      }
      .tab {
        display: flex; align-self: stretch; box-sizing: border-box; width: 101px; padding: 0 5px 0 6px;
        background: linear-gradient(#9c8c66, #9c8c66) center bottom 1px / 90px 2px no-repeat,
          linear-gradient(#fff0cb, #fae0aa);
        border-radius: 3px 3px 0 0;
      }
      .tab span { flex: 1; line-height: 32px; white-space: nowrap; }
      button { all: unset; cursor: default; }
      .x { height: 16px; display: flex; align-items: center; }
      .add, .close { background: #d0d0d0; border-radius: 2px; }
      .close { margin-left: auto; display: flex; }
      b { color: #0b4a86; font-weight: normal; }
    `;
  }
  markup() {
    return `
      <div class="tab"><span>Architecture <b>*</b></span>
        <button type="button" class="x" aria-label="Close tab"><svg width="7" height="7"><path d="M1 1l5 5M6 1L1 6" stroke="#222" stroke-width="1.500"/></svg></button>
      </div>
      <button type="button" class="add" aria-label="New tab"><px-icon name="plusThin"></px-icon></button>
      <button type="button" class="close" aria-label="Close document"><px-icon name="winClose"></px-icon></button>`;
  }
}
customElements.define('document-tabs', DocumentTabs);

// ---------- side pane ----------
class SidePane extends PxElement {
  styles() {
    return `
      :host { display: flex; flex-direction: column; width: 32px; background: #f3f3f3; flex: none; overflow: hidden; }
      .top { height: 11px; padding-left: 23px; background: #e2e2e2; }
      .grip { height: 9px; margin: 2px 3px 2px 4px; background: radial-gradient(circle at 1px 1px, #bbb 1px, transparent 1px) 0 0 / 3px 3px; }
      hr { width: 28px; height: 1px; margin: 1px 2px; border: 0; background: #bbb; }
      tool-button { align-self: flex-start; }
      .more { display: block; margin: 3px auto; }
      .top svg { display: block; }
    `;
  }
  markup() {
    return `
      <div class="top"><svg width="9" height="11"><path d="M1.500 2v7M7 2L4 5.500 7 9" fill="none" stroke="#333" stroke-width="1.300"/></svg></div>
      <div class="grip"></div>
      ${tool('bookmark', 'Bookmarks', 'dot')}${tool('pages', 'Thumbnails')}${tool('comments', 'Comments', 'dot')}
      ${tool('clip', 'Attachments', 'dot')}${tool('fields', 'Fields')}${tool('signs', 'Signatures')}
      ${tool('layers', 'Layers', 'dot')}${tool('content', 'Content')}${tool('places', 'Destinations', 'dot')}
      ${tool('tree', 'Structure')}${tool('links', 'Links')}<hr>
      ${tool('tag', 'Tags')}${tool('reflow', 'Order')}
      <svg class="more" width="8" height="10"><path d="M1 1l3 3 3-3M1 5l3 3 3-3" fill="none" stroke="#333" stroke-width="1.400"/></svg>`;
  }
}
customElements.define('side-pane', SidePane);

// ---------- drawing on the page ----------
// All wall arcs share one centre below the visible part of the sheet.
const CX = 702;
const CY = 690;

function arc(r, yEnd, xRight = CX) {
  const left = CX - Math.sqrt(r * r - (CY - yEnd) ** 2);
  const yRight = CY - Math.sqrt(r * r - (xRight - CX) ** 2);
  return `M${left.toFixed(1)} ${yEnd}A${r} ${r} 0 0 1 ${xRight} ${yRight.toFixed(1)}`;
}

function stipple() {
  let seed = 7;
  const rnd = () => (seed = (seed * 16807) % 2147483647) / 2147483647;
  let d = '';
  for (let i = 0; i < 640; i++) {
    const a = rnd() * 1.310;
    const r = 432 + rnd() * 13;
    const x = CX - r * Math.sin(a);
    const y = CY - r * Math.cos(a);
    const s = rnd() > .8 ? 2 : 1;
    d += `M${x.toFixed(1)} ${y.toFixed(1)}l${s} ${(rnd() * s).toFixed(1)}l-${(s * .7).toFixed(1)} ${s}z`;
  }
  return d;
}

class PlanDrawing extends PxElement {
  styles() {
    return `
      :host { display: block; width: 679px; flex: none; background: #fff; box-shadow: 0 0 1px 1px #333, 0 0 10px 2px rgba(0,0,0,.55); overflow: hidden; }
      svg { display: block; }
      text { font-family: "Liberation Sans", Arial, sans-serif; font-size: 6px; fill: #222; }
      .room { font-size: 10px; fill: #000; }
    `;
  }
  markup() {
    const handles = [[129, 456, 5], [283, 456, 5], [129, 554, 5], [283, 554, 5], [206, 456, 4], [206, 554, 4], [130, 505, 4], [282, 505, 4]];
    return `<svg width="679" height="383" viewBox="113 197 679 383" role="img" aria-label="Architecture plan">
      <defs><linearGradient id="knob" x2="1" y2="1"><stop stop-color="#fff6dc"/><stop offset="1" stop-color="#f7c65c"/></linearGradient>
      <radialGradient id="spin" cx=".35" cy=".35"><stop stop-color="#c9ffb8"/><stop offset="1" stop-color="#18c010"/></radialGradient></defs>
      <path d="${stipple()}" fill="#000" stroke="#000" stroke-width=".4"/>
      <g fill="none" stroke="#111">
        <path d="${arc(446, 580, 762)}"/>
        <path d="${arc(430.500, 538, 770)}"/>
        <path d="${arc(428.500, 538)}"/>
        <path d="${arc(429.500, 538)}" stroke="#555"/>
        <path d="${arc(421, 538)}"/>
        <path d="${arc(386, 580)}" stroke-width="1.400"/>
        <path d="M466.500 259V580M461 259.500H702M702.500 229V316" stroke="#000"/>
        <path d="M702.500 325V580" stroke-dasharray="12 9 30 9" stroke="#000"/>
        <path d="M300 538.500H702M300 540.500H702M305 563.500H702" stroke="#000"/>
        <path d="M462 256l7 6M463 535l7 6M463 560l7 6M699 307l6-6" stroke-width="1.400"/>
        <path d="M249 484.500h20L300 541M204 520.500h37.500V539M237 535l4.500 5 4-5M234 540.500h31"/>
        <path d="M396 484.500h-9L351 457M352 463l-1-6 6 1" />
        <path d="M558 508.500h-8.500L545 537M542 533l3 5 4-5M454 518q0 16 10 21M460 535l5 5"/>
        <path d="M303 544l40 15M336 554l6 7M343 555l-6 6" stroke-width="1.300"/>
        <path d="M259.500 580l14-46.500L299 542M264.500 580l14-44M283.500 580q5-22 16-39M279 580q5-22 17-40"/>
        <path d="M287 547.500h15M287 557.500h15M289 547v16M289 563.500h14" stroke-width="2"/>
      </g>
      <path d="M299 538h5l1 4-1 15h3v7h-4v-5h-4z" fill="#111"/>
      <path d="M303 548l4 16h-4z" fill="#fff" stroke="#111"/>
      <g fill="none" stroke="#f01818" stroke-width="1.100">
        <ellipse cx="180" cy="260" rx="27.500" ry="34.500"/><ellipse cx="309" cy="361.500" rx="62.500" ry="67"/>
        <ellipse cx="402.500" cy="298" rx="44" ry="43.500"/><ellipse cx="476.500" cy="270" rx="32" ry="30.500"/>
        <ellipse cx="206" cy="505.500" rx="77" ry="49.500"/>
      </g>
      <text x="164" y="487">1 3/4"x11 7/8" SCL 'CURVED'</text>
      <text x="164" y="494">LEDGER, C/W ANCHOR</text>
      <text x="164" y="501">BOLTS CAST INTO CONC</text>
      <text x="164" y="508">CORBEL</text>
      <text x="164" y="523">POUR JOINT</text>
      <text x="399" y="487">FORM SET #3</text>
      <text x="561" y="511">5/8" OR 3/4" PLYWOOD</text>
      <text x="561" y="518">SHEATHING ON 11 7/8" MANUF</text>
      <text x="561" y="525">JOISTS @ 16" O/C MAX</text>
      <text x="572" y="428" class="room">BEDROOMS</text>
      <text transform="translate(462 426) rotate(-90)">11' - 7 5/8"</text>
      <text transform="translate(457 518) rotate(-90)">5/8"</text>
      <text transform="translate(462 562) rotate(-90)">11 7/8"</text>
      <text transform="translate(476 374) rotate(-37)">22' - 8 3/4"</text>
      <rect x="129" y="456" width="155" height="99" fill="none" stroke="#d6e9f8" stroke-width="3"/>
      <rect x="128.500" y="455.500" width="156" height="100" fill="none" stroke="#1f6fb8" stroke-dasharray="2 1"/>
      <rect x="129.500" y="456.500" width="154" height="98" fill="none" stroke="#1f6fb8" stroke-dasharray="2 1" stroke-dashoffset="2"/>
      <path d="M206 441v12" stroke="#999" stroke-width="2" stroke-dasharray="2 2"/>
      <circle cx="206" cy="434" r="5.500" fill="url(#spin)" stroke="#222"/>
      <circle cx="206" cy="505" r="6.500" fill="none" stroke="#777"/><circle cx="206" cy="505" r="1" fill="#555"/>
      ${handles.map(([x, y, r]) => `<rect x="${x - r}" y="${y - r}" width="${r * 2}" height="${r * 2}" rx="2" fill="url(#knob)" stroke="#222" stroke-width="1.200"/>`).join('')}
    </svg>`;
  }
}
customElements.define('plan-drawing', PlanDrawing);

class DocumentView extends PxElement {
  styles() {
    return `
      :host { display: flex; flex: 1; min-height: 0; }
      .desk {
        flex: 1; min-width: 0; display: flex; justify-content: center; overflow: hidden;
        background: repeating-linear-gradient(45deg, rgba(0,0,0,.05) 0 1px, transparent 1px 3px),
          linear-gradient(#8f8f8f, #b0b0b0 40%);
        box-shadow: inset 0 0 5px 1px #444;
      }
      .bar { width: 17px; display: flex; flex-direction: column; align-items: center; background: #f3f3f3; padding: 4px 0; box-sizing: border-box; }
      .thumb { width: 5px; height: 18px; margin-top: 5px; border-radius: 3px; background: #8c8c8c; }
      .bar svg:last-child { margin-top: auto; }
      .bar svg { flex: none; }
    `;
  }
  markup() {
    return `<div class="desk"><plan-drawing></plan-drawing></div>
      <div class="bar">
        <svg width="8" height="6"><path d="M1 5l3-3 3 3" fill="none" stroke="#666" stroke-width="1.500"/></svg>
        <div class="thumb"></div>
        <svg width="8" height="6"><path d="M1 1l3 3 3-3" fill="none" stroke="#666" stroke-width="1.500"/></svg>
      </div>`;
  }
}
customElements.define('document-view', DocumentView);

// ---------- status bar ----------
class StatusBar extends PxElement {
  styles() {
    return `
      :host { display: flex; align-items: center; height: 29px; background: #f3f3f3; border-top: 1px solid #999; }
      hr { width: 1px; height: 28px; margin: 0 2px; border: 0; background: #bbb; flex: none; }
      .page, .zoom {
        display: flex; align-items: center; box-sizing: border-box; height: 23px; flex: none;
        border: 1px solid #b5b5b5; border-radius: 2px; background: #fff;
      }
      .page { width: 90px; margin: 0 1px; padding-right: 3px; }
      .page input { all: unset; flex: 1; min-width: 0; text-align: right; }
      .page small { font-size: 9px; color: #555; align-self: flex-start; line-height: 16px; padding-left: 1px; }
      .zoom { width: 82px; position: relative; }
      select { all: unset; flex: 1; padding-left: 4px; }
      .zoom svg { position: absolute; right: 4px; pointer-events: none; }
      .slide { flex: 1; min-width: 60px; margin: 0 2px; display: flex; }
      input[type=range] {
        appearance: none; width: 100%; height: 20px; margin: 0; background:
          linear-gradient(#8f8f8f, #8f8f8f) left center / 24px 3px no-repeat,
          linear-gradient(#777, #777) 50% 5px / 1px 1px no-repeat,
          linear-gradient(#777, #777) 50% 15px / 1px 1px no-repeat,
          linear-gradient(#bbb, #bbb) left center / 100% 2px no-repeat;
      }
      input[type=range]::-webkit-slider-thumb {
        appearance: none; width: 19px; height: 19px; border: 1px solid #666; border-radius: 50%;
        background: radial-gradient(circle, #888 3px, #f8f8f8 4px);
      }
      .gap { width: 22px; }
      .strip { width: 12px; align-self: stretch; background: #e4e4e4; flex: none; }
      .strip svg { display: block; margin: 2px auto; }
    `;
  }
  markup() {
    return `
      <grip-handle></grip-handle>
      <tool-button icon="gears">Options...</tool-button>${tool('chev', 'Options list')}
      <span class="gap"></span><grip-handle></grip-handle>
      ${tool('first', 'First page')}${tool('prev', 'Previous page')}
      <div class="page"><input type="text" aria-label="Page" value="1"><span>/</span><small>8</small></div>
      ${tool('next', 'Next page')}${tool('last', 'Last page')}<hr>
      ${tool('back', 'Previous view')}${tool('fwd', 'Next view')}
      <grip-handle></grip-handle>
      ${tool('onePage', 'Single page')}${tool('contPage', 'Continuous', 'selected')}${tool('twoPage', 'Two pages')}${tool('fourPage', 'Two pages continuous')}
      <grip-handle></grip-handle>
      <div class="zoom"><select aria-label="Zoom"><option>50%</option></select>
        <svg width="8" height="6"><path d="M1 1l3 3 3-3" fill="none" stroke="#222" stroke-width="1.500"/></svg></div><hr>
      ${tool('minus', 'Zoom out')}
      <div class="slide"><input type="range" aria-label="Zoom level" min="0" max="100" value="24"></div>
      ${tool('zoomIn', 'Zoom in')}
      <grip-handle></grip-handle>${tool('panes', 'Pane layout')}${tool('chevSoft', 'Layout options')}
      <div class="strip"><svg width="8" height="8"><path d="M1 1l3 3 3-3M0 7.500h8" fill="none" stroke="#333" stroke-width="1.300"/></svg></div>`;
  }
}
customElements.define('status-bar', StatusBar);

class PdfEditor extends PxElement {
  styles() {
    return `
      :host {
        display: flex; flex-direction: column; height: 100vh; box-sizing: border-box; position: relative;
        border-bottom: 2px solid #aaa; border-radius: 8px; overflow: hidden;
      }
      /* window frame, drawn over the bars */
      :host::after {
        content: ""; position: absolute; inset: 0; pointer-events: none;
        border: solid #aaa; border-width: 1px 0 0 1px; border-radius: 8px;
      }
      title-bar, ribbon-tabs, ribbon-panel, document-tabs, status-bar { flex: none; }
      main { flex: 1; min-height: 0; display: flex; }
      section { flex: 1; min-width: 0; display: flex; flex-direction: column; }
    `;
  }
  markup() {
    return `
      <title-bar></title-bar>
      <ribbon-tabs></ribbon-tabs>
      <ribbon-panel></ribbon-panel>
      <document-tabs></document-tabs>
      <main><side-pane></side-pane><section><document-view></document-view><status-bar></status-bar></section></main>`;
  }
}
customElements.define('pdf-editor', PdfEditor);
</script>
</body>
</html>
